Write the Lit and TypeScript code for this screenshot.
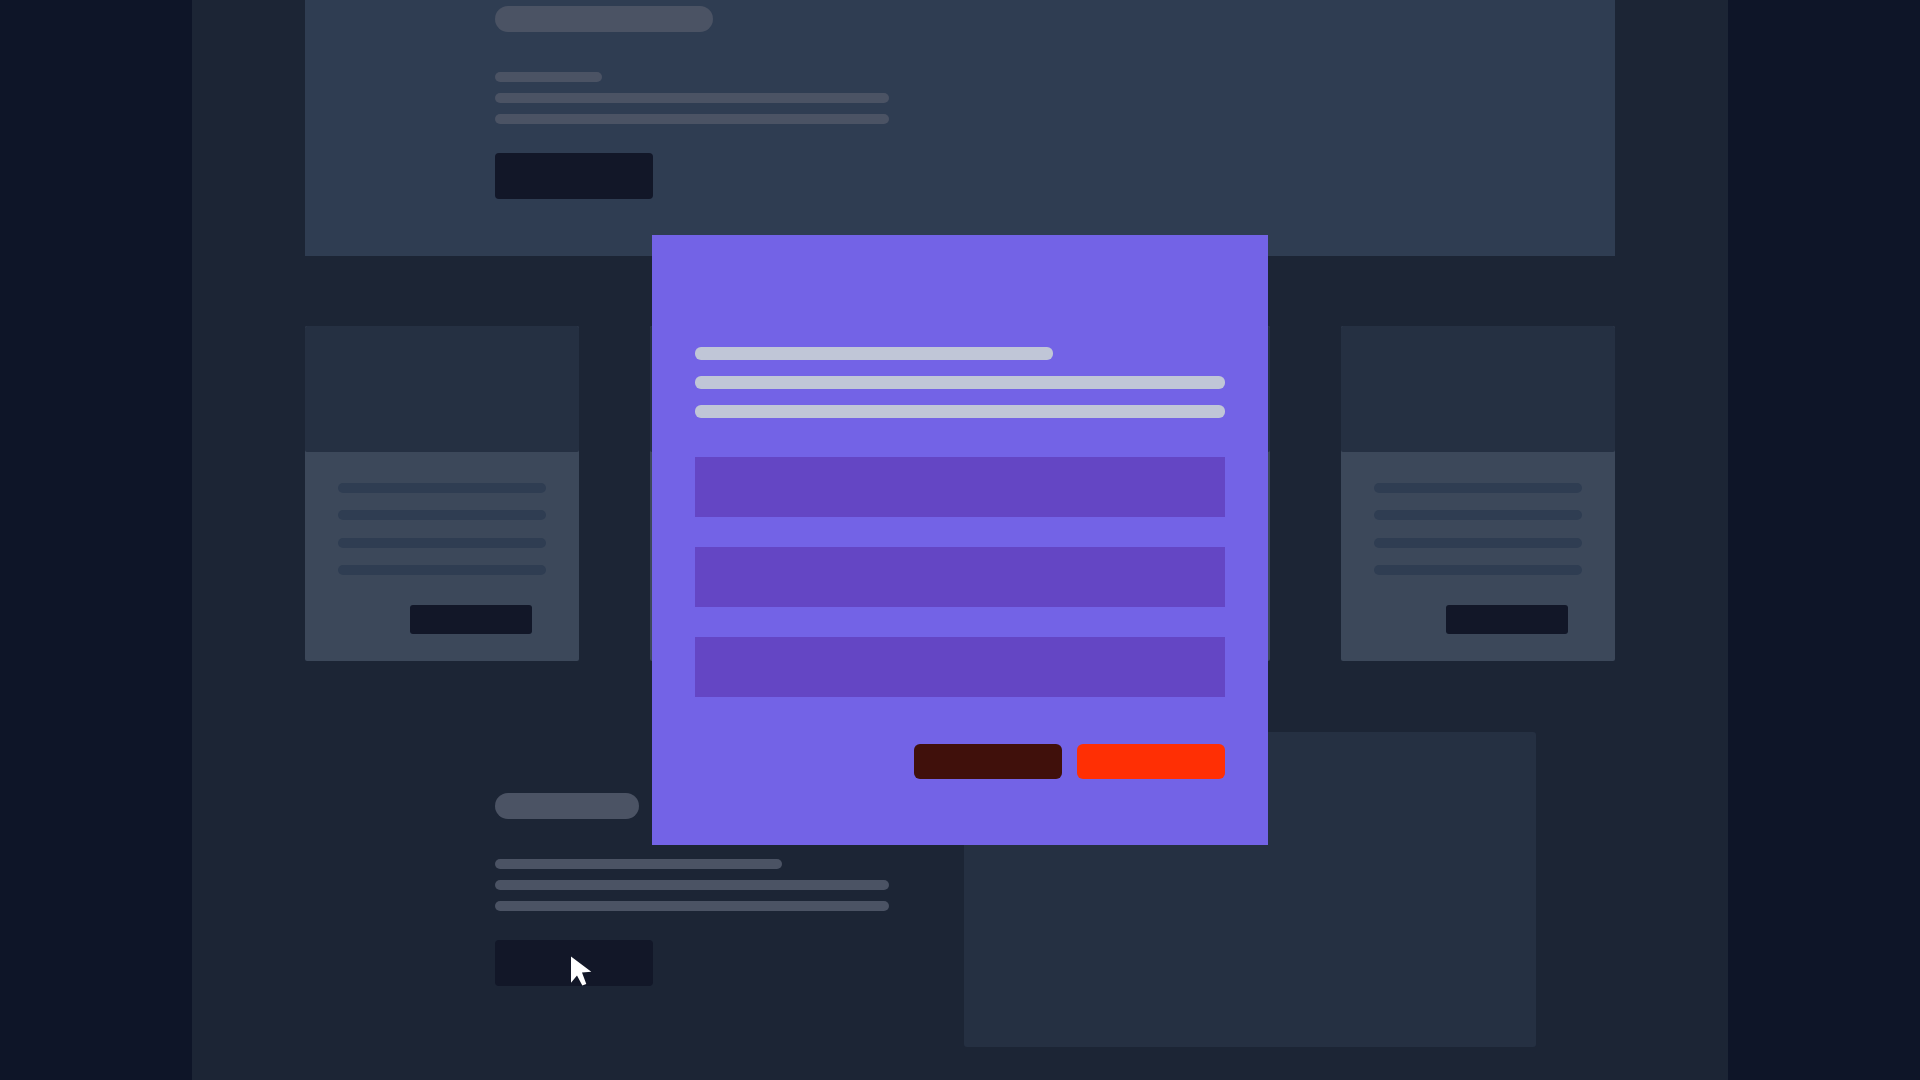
import { LitElement, html, css } from "lit";
import { customElement, property } from "lit/decorators.js";
import { styleMap } from "lit/directives/style-map.js";

/* Placeholder copy: a title bar, three text lines and a call-to-action button. */
@customElement("copy-block")
class CopyBlock extends LitElement {
  @property({ type: Number }) titleWidth = 100;
  @property({ type: Number }) leadWidth = 100;
  @property({ type: String }) label = "Action";

  static styles = css`
    :host {
      display: block;
      width: 394px;
      max-width: 100%;
    }
    .title {
      height: 26px;
      border-radius: 13px;
      background: #4b5364;
    }
    .lines {
      display: flex;
      flex-direction: column;
      gap: 11px;
      margin: 40px 0 29px;
    }
    .line {
      height: 10px;
      border-radius: 5px;
      background: #4b5364;
    }
    .action {
      display: block;
      width: 158px;
      height: 46px;
      padding: 0;
      border: 0;
      border-radius: 4px;
      background: #121728;
    }
    .anchor {
      position: relative;
      width: 158px;
    }
  `;

  render() {
    return html`
      <div class="title" style=${styleMap({ width: `${this.titleWidth}px` })}></div>
      <div class="lines">
        <div class="line" style=${styleMap({ width: `${this.leadWidth}px` })}></div>
        <div class="line"></div>
        <div class="line"></div>
      </div>
      <div class="anchor">
        <button class="action" type="button" aria-label=${this.label}></button>
        <slot></slot>
      </div>
    `;
  }
}

@customElement("content-card")
class ContentCard extends LitElement {
  static styles = css`
    :host {
      display: block;
    }
    .card {
      border-radius: 2px;
      overflow: hidden;
      background: #3c485a;
    }
    .media {
      height: 126px;
      border-radius: 2px;
      background: #253042;
    }
    .body {
      padding: 31px 33px 27px;
    }
    .lines {
      display: flex;
      flex-direction: column;
      justify-content: space-between;
      height: 92px;
    }
    .line {
      height: 10px;
      border-radius: 5px;
      background: #2f3d52;
    }
    .footer {
      display: flex;
      justify-content: flex-end;
      padding: 30px 14px 0 0;
    }
    .action {
      width: 122px;
      height: 29px;
      padding: 0;
      border: 0;
      border-radius: 3px;
      background: #121728;
    }
  `;

  render() {
    return html`
      <article class="card">
        <div class="media"></div>
        <div class="body">
          <div class="lines">
            ${[0, 1, 2, 3].map(() => html`<div class="line"></div>`)}
          </div>
          <div class="footer">
            <button class="action" type="button" aria-label="Open card"></button>
          </div>
        </div>
      </article>
    `;
  }
}

@customElement("form-dialog")
class FormDialog extends LitElement {
  static styles = css`
    :host {
      display: block;
      width: 616px;
      max-width: 100%;
    }
    .dialog {
      padding: 112px 43px 66px;
      background: #7363e6;
    }
    .lines {
      display: flex;
      flex-direction: column;
      gap: 16px;
    }
    .line {
      height: 13px;
      border-radius: 6px;
      background: #c0c6d7;
    }
    .lead {
      width: 358px;
      max-width: 100%;
    }
    .fields {
      display: flex;
      flex-direction: column;
      gap: 30px;
      margin: 39px 0 47px;
    }
    .field {
      box-sizing: border-box;
      width: 100%;
      height: 60px;
      padding: 0 16px;
      border: 0;
      border-radius: 0;
      outline: 0;
      background: #6446c4;
      color: #ffffff;
      font: 18px "Liberation Sans", sans-serif;
    }
    .actions {
      display: flex;
      justify-content: flex-end;
      gap: 15px;
    }
    .action {
      width: 148px;
      height: 35px;
      padding: 0;
      border: 0;
      border-radius: 6px;
    }
    .cancel {
      background: #40100b;
    }
    .submit {
      background: #ff2f04;
    }
  `;

  render() {
    return html`
      <form class="dialog" role="dialog" aria-label="Form">
        <div class="lines">
          <div class="line lead"></div>
          <div class="line"></div>
          <div class="line"></div>
        </div>
        <div class="fields">
          ${[1, 2, 3].map(
            (n) => html`<input class="field" type="text" aria-label=${`Field ${n}`} />`
          )}
        </div>
        <div class="actions">
          <button class="action cancel" type="button" aria-label="Cancel"></button>
          <button class="action submit" type="button" aria-label="Submit"></button>
        </div>
      </form>
    `;
  }
}

@customElement("app-root")
class AppRoot extends LitElement {
  static styles = css`
    :host {
      display: block;
      background: #0e1528;
    }
    .page {
      box-sizing: border-box;
      width: 80%;
      min-height: 100vh;
      margin: 0 auto;
      padding: 0 113px 33px;
      background: #1c2535;
    }
    .hero {
      padding: 6px 190px 57px;
      background: #2f3d52;
    }
    .cards {
      display: grid;
      grid-template-columns: repeat(4, 1fr);
      gap: 71px;
      margin: 70px 0 71px;
    }
    .feature {
      display: flex;
      align-items: center;
      gap: 75px;
      padding: 0 79px 0 190px;
    }
    .copy {
      flex: none;
    }
    .picture {
      flex: 1;
      height: 315px;
      border-radius: 3px;
      background: #253042;
    }
    .overlay {
      position: fixed;
      inset: 0;
      display: grid;
      place-items: center;
      pointer-events: none;
    }
    .dialog {
      pointer-events: auto;
    }
    .pointer {
      position: absolute;
      left: 76px;
      top: 16px;
      overflow: visible;
      pointer-events: none;
    }
  `;

  render() {
    return html`
      <main class="page">
        <section class="hero">
          <copy-block .titleWidth=${218} .leadWidth=${107} label="Get started"></copy-block>
        </section>
        <section class="cards">
          ${[0, 1, 2, 3].map(() => html`<content-card></content-card>`)}
        </section>
        <section class="feature">
          <copy-block class="copy" .titleWidth=${144} .leadWidth=${287} label="Open form">
            <svg class="pointer" width="21" height="30" viewBox="0 0 21 30" aria-hidden="true">
              <path
                d="M0 0.4 L20.3 15.8 L11 16.6 L15.3 28 L11.3 29.6 L6 19.6 L0 26.8 Z"
                fill="#ffffff"
              />
            </svg>
          </copy-block>
          <div class="picture"></div>
        </section>
      </main>
      <div class="overlay">
        <form-dialog class="dialog"></form-dialog>
      </div>
    `;
  }
}
